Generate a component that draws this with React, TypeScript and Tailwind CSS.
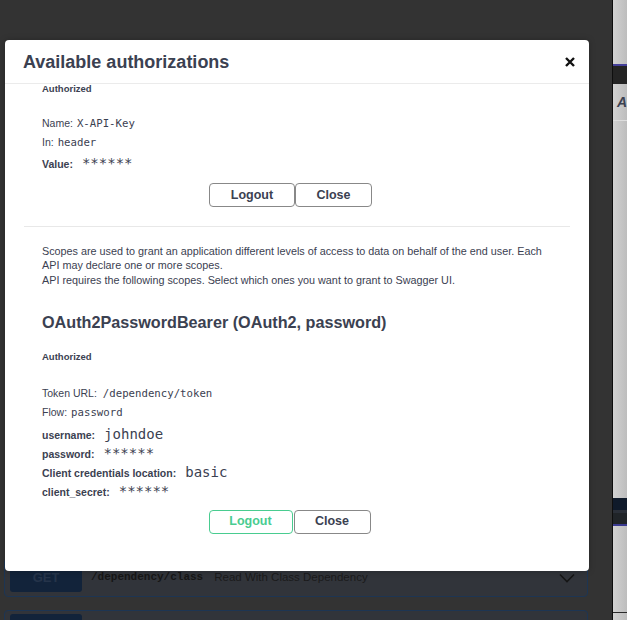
import React from 'react';

const sans = "font-['Liberation_Sans',Arial,sans-serif]";
const mono = "font-['DejaVu_Sans_Mono',monospace]";

const Label: React.FC<{ children: React.ReactNode }> = ({ children }) => (
  <span className={`${sans} text-[10.5px] font-bold leading-[19px] text-[#3b4151]`}>{children}</span>
);

const Value: React.FC<{ children: React.ReactNode }> = ({ children }) => (
  <span className={`${mono} ml-[9px] text-[14px] leading-[19px] text-[#3b4151]`}>{children}</span>
);

const Plain: React.FC<{ label: string; code: string; gap?: string }> = ({ label, code, gap = 'ml-[4px]' }) => (
  <div className="flex h-[19px] items-baseline">
    <span className={`${sans} text-[10.5px] leading-[19px] text-[#3b4151]`}>{label}</span>
    <span className={`${mono} ${gap} text-[10.7px] leading-[19px] text-[#3b4151]`}>{code}</span>
  </div>
);

const Authorized: React.FC<{ tight?: boolean }> = ({ tight }) => (
  <div
    className={`${sans} ${
      tight ? 'h-[10px] leading-[10px]' : 'h-[12px] leading-[12px]'
    } text-[9.5px] font-bold text-[#3b4151]`}
  >
    Authorized
  </div>
);

const Buttons: React.FC<{ green?: boolean }> = ({ green }) => (
  <div className="flex justify-center">
    <div className={`flex ${green ? 'mr-[15px]' : 'mr-[13px]'}`}>
      <button
        type="button"
        className={`${sans} h-[24px] rounded-[4px] border text-[12.5px] font-bold ${
          green ? 'mr-[1px] w-[84px] border-[#49cc90] text-[#49cc90]' : 'w-[86px] border-[#888] text-[#3b4151]'
        }`}
      >
        Logout
      </button>
      <button
        type="button"
        className={`${sans} h-[24px] w-[77px] rounded-[4px] border border-[#888] text-[12.5px] font-bold text-[#3b4151]`}
      >
        Close
      </button>
    </div>
  </div>
);

function Operation({ top }: { top: boolean }) {
  return (
    <div
      className={`flex rounded-[4px] border border-[#1d3553] bg-[#31343a] ${
        top ? 'h-[39px] items-center' : 'h-[40px] items-start pt-[3px]'
      }`}
    >
      <div
        className={`${sans} ml-[5px] flex h-[28px] w-[72px] items-center justify-center rounded-[3px] bg-[#12233a] text-[13px] font-bold text-[#25344a]`}
      >
        {top ? 'GET' : ''}
      </div>
      {top && (
        <>
          <span className={`${"font-['Liberation_Mono',monospace]"} ml-[9px] text-[11px] font-bold text-[#161616]`}>
            /dependency/class
          </span>
          <span className={`${sans} ml-[11px] flex-1 text-[11.5px] text-[#1a1a1a]`}>Read With Class Dependency</span>
          <svg width="16" height="10" viewBox="0 0 16 10" className="mr-[12px]">
            <path d="M1 1.5 L8 8.5 L15 1.5" fill="none" stroke="#151515" strokeWidth="1.6" />
          </svg>
        </>
      )}
    </div>
  );
}

export default function App() {
  return (
    <div className="flex h-[620px] w-[627px] overflow-hidden bg-[#333]">
      <div className="relative h-full w-[613px] bg-[#333]">
        {/* dimmed page behind the modal */}
        <div className="flex flex-col gap-[13px] pl-[4px] pr-[24px] pt-[558px]">
          <Operation top />
          <Operation top={false} />
        </div>

        {/* modal */}
        <div className="absolute left-[5px] top-[40px] flex h-[531px] w-[584px] flex-col overflow-hidden rounded-[4px] bg-white shadow-[0_0_6px_rgba(0,0,0,0.25)]">
          <div className="flex h-[44px] shrink-0 items-center justify-between border-b border-[#ebebeb] pl-[18px] pr-[14px] pt-[1px]">
            <h3 className={`${sans} text-[18px] font-bold text-[#3b4151]`}>Available authorizations</h3>
            <svg width="10" height="10" viewBox="0 0 10 10">
              <path d="M1 1 L9 9 M9 1 L1 9" stroke="#111" strokeWidth="2.4" />
            </svg>
          </div>

          <div className="flex-1 overflow-hidden px-[19px]">
            <div>
              {/* api key */}
              <div className="pl-[18px]">
                <Authorized tight />
                <div className="mt-[20px]">
                  <Plain label="Name:" code="X-API-Key" />
                  <Plain label="In:" code="header" />
                  <div className="mt-[2px] flex h-[19px] items-baseline">
                    <Label>Value:</Label>
                    <Value>******</Value>
                  </div>
                </div>
              </div>
              <div className="mt-[10px]">
                <Buttons />
              </div>

              <div className="mt-[19px] h-px bg-[#e8e8e8]" />

              {/* oauth2 */}
              <div className="pl-[18px]">
                <p className={`${sans} mt-[17px] text-[10.8px] leading-[14px] text-[#3b4151]`}>
                  Scopes are used to grant an application different levels of access to data on behalf of the end user. Each
                  <br />
                  API may declare one or more scopes.
                </p>
                <p className={`${sans} mt-[1px] text-[10.8px] leading-[14px] text-[#3b4151]`}>
                  API requires the following scopes. Select which ones you want to grant to Swagger UI.
                </p>

                <h4 className={`${sans} mt-[23px] text-[16.2px] font-bold leading-[24px] text-[#3b4151]`}>
                  OAuth2PasswordBearer (OAuth2, password)
                </h4>
                <div className="mt-[17px]">
                  <Authorized />
                </div>
                <div className="mt-[21px]">
                  <Plain label="Token URL:" code="/dependency/token" gap="ml-[6px]" />
                  <Plain label="Flow:" code="password" />
                  <div className="mt-[3px] flex h-[19px] items-baseline">
                    <Label>username:</Label>
                    <Value>johndoe</Value>
                  </div>
                  <div className="flex h-[19px] items-baseline">
                    <Label>password:</Label>
                    <Value>******</Value>
                  </div>
                  <div className="flex h-[18.5px] items-baseline">
                    <Label>Client credentials location:</Label>
                    <Value>basic</Value>
                  </div>
                  <div className="flex h-[19px] items-baseline">
                    <Label>client_secret:</Label>
                    <Value>******</Value>
                  </div>
                </div>
              </div>
              <div className="mt-[9px]">
                <Buttons green />
              </div>
            </div>
          </div>
        </div>
      </div>

      <div className="w-px bg-[#0e0e0e]" />

      {/* edge of the window behind */}
      <div className="flex flex-1 flex-col bg-gradient-to-r from-[#d2d2d2] to-[#bdbdbd]">
        <div className="h-[64px]" />
        <div className="h-[2px] bg-[#45409a]" />
        <div className="h-[18px] bg-[#242424]" />
        <div className={`${sans} mt-[9px] h-[18px] pl-[4px] text-[14px] font-bold italic leading-[18px] text-[#3b4151]`}>A</div>
        <div className="mt-[9px] h-px bg-[#dedede]" />
        <div className="h-[377px]" />
        <div className="h-[12px] bg-[#0f1a2a]" />
        <div className="h-[3px] bg-[#2a2f38]" />
        <div className="h-[11px] bg-[#202428]" />
        <div className="h-[2px] bg-[#3a3a90]" />
        <div className="h-[86px]" />
        <div className="h-px bg-[#2a2a2a]" />
      </div>
    </div>
  );
}
